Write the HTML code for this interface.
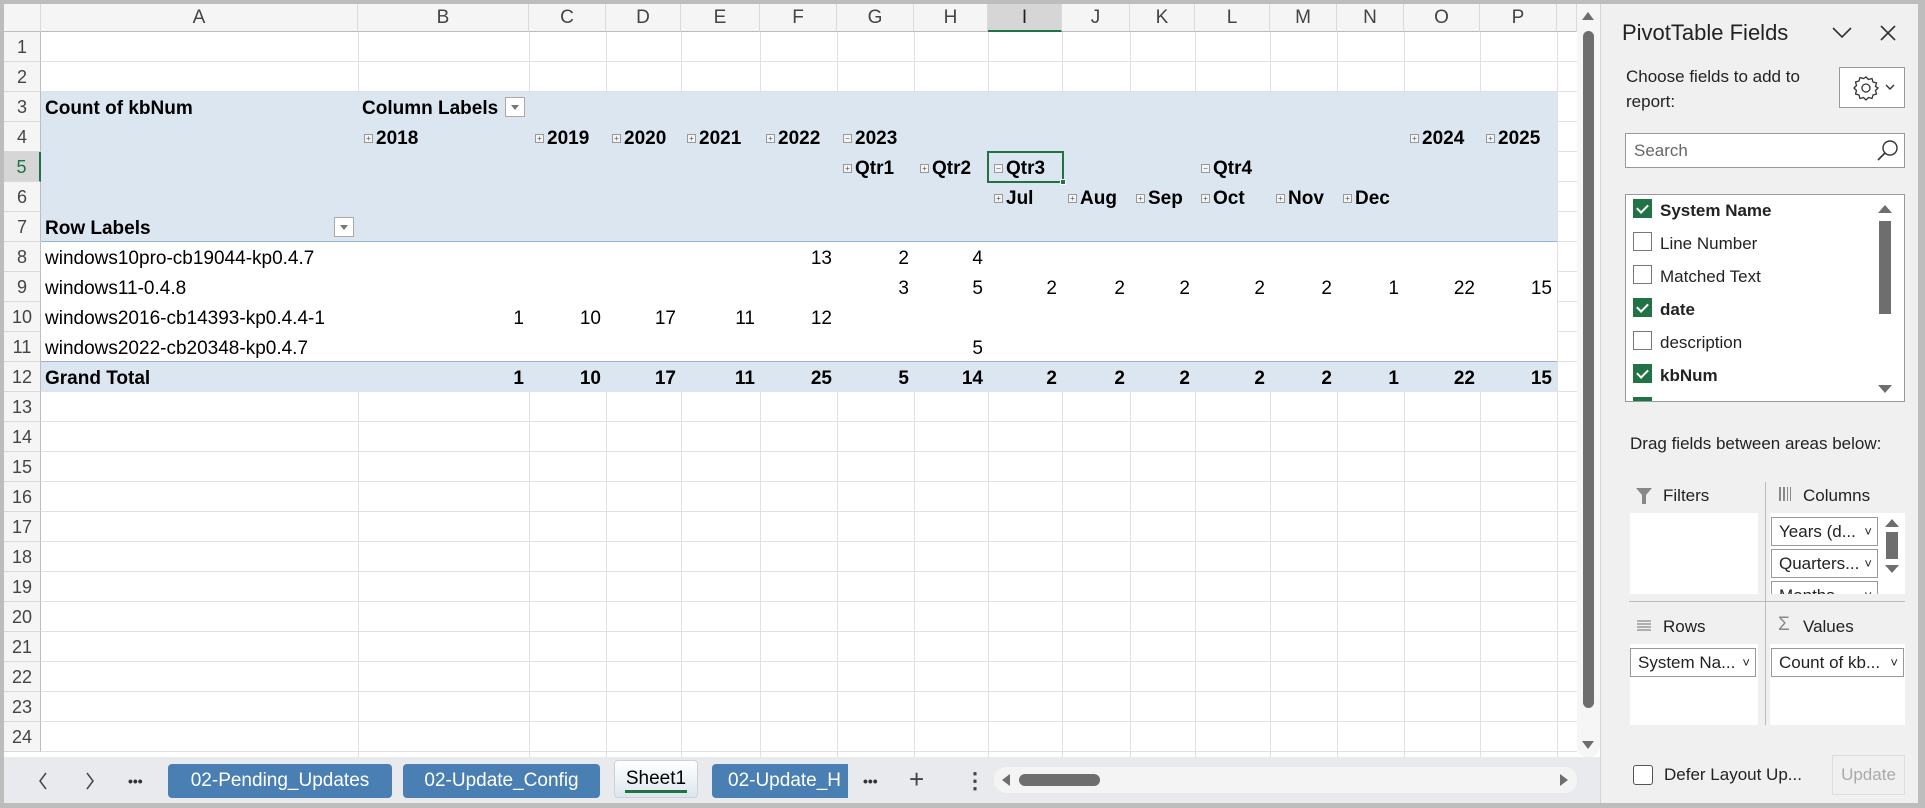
<!DOCTYPE html>
<html><head><meta charset="utf-8">
<style>
*{margin:0;padding:0;box-sizing:border-box}
body{width:1925px;height:808px;background:#bdbdbd;position:relative;overflow:hidden;font-family:"Liberation Sans",Arial,sans-serif;color:#000}
.a{position:absolute}
#sheet{position:absolute;left:4px;top:4px;width:1596px;height:799px;background:#fff;overflow:hidden}
.gl{position:absolute;left:41px;top:32px;width:1536px;height:725px;background:repeating-linear-gradient(to bottom,transparent 0,transparent 29px,#e1e1e1 29px,#e1e1e1 30px)}
.vl{position:absolute;top:32px;width:1px;height:725px;background:#e1e1e1}
.ch{position:absolute;top:4px;height:28px;line-height:28px;text-align:center;font-size:19px;color:#444;background:#f5f5f5;border-right:1px solid #dadada;border-bottom:1px solid #bdbdbd}
.rh{position:absolute;left:4px;width:37px;height:30px;line-height:30px;text-align:center;font-size:18px;color:#444;background:#f5f5f5;border-bottom:1px solid #dadada;border-right:1px solid #bdbdbd}
.c{position:absolute;height:30px;line-height:34px;font-size:19px;white-space:nowrap}
.b{font-weight:bold}
.r{text-align:right;padding-right:5px}
.pm{display:inline-block;width:9px;height:9px;border:1px solid #999;font-size:8px;line-height:7px;text-align:center;font-style:normal;font-weight:normal;color:#555;vertical-align:3px;margin-right:3px;background:#f4f4f4}
.dd{position:absolute;width:20px;height:20px;border:1px solid #aaa;background:#fff}
.dd:after{content:"";position:absolute;left:5px;top:7px;border-left:4px solid transparent;border-right:4px solid transparent;border-top:5px solid #777}
.tab{position:absolute;top:764px;height:34px;line-height:34px;border-radius:4px;background:#4a7fb3;color:#fff;font-size:19px;text-align:center}
.p{position:absolute;font-size:17px;color:#222;white-space:nowrap}
.cb{position:absolute;width:19px;height:19px;border:1.5px solid #777;background:#fff}
.cb.on{background:#217346;border-color:#217346}
.cb.on:after{content:"";position:absolute;left:5px;top:2px;width:5px;height:9px;border-right:2px solid #fff;border-bottom:2px solid #fff;transform:rotate(45deg)}
.fi{position:absolute;height:29px;line-height:27px;border:1px solid #999;background:#fff;font-size:17px;padding-left:7px;color:#222;white-space:nowrap;overflow:hidden}
.fi:after{content:"˅";position:absolute;right:5px;top:0;font-size:13px}
</style></head><body>
<div id="sheet"></div>
<div class="gl"></div>
<div class="vl" style="left:358px"></div><div class="vl" style="left:529px"></div><div class="vl" style="left:606px"></div><div class="vl" style="left:681px"></div><div class="vl" style="left:760px"></div><div class="vl" style="left:837px"></div><div class="vl" style="left:914px"></div><div class="vl" style="left:988px"></div><div class="vl" style="left:1062px"></div><div class="vl" style="left:1130px"></div><div class="vl" style="left:1195px"></div><div class="vl" style="left:1270px"></div><div class="vl" style="left:1337px"></div><div class="vl" style="left:1404px"></div><div class="vl" style="left:1480px"></div><div class="vl" style="left:1557px"></div>
<div class="a" style="left:41px;top:92px;width:1516px;height:150px;background:#dce6f1;border-bottom:1px solid #95b3d7"></div>
<div class="a" style="left:41px;top:242px;width:1516px;height:120px;background:#fff"></div>
<div class="a" style="left:41px;top:361px;width:1516px;height:31px;background:#dce6f1;border-top:1px solid #95b3d7"></div>
<div class="ch" style="left:4px;width:37px"></div>
<div class="ch" style="left:41px;width:317px">A</div><div class="ch" style="left:358px;width:171px">B</div><div class="ch" style="left:529px;width:77px">C</div><div class="ch" style="left:606px;width:75px">D</div><div class="ch" style="left:681px;width:79px">E</div><div class="ch" style="left:760px;width:77px">F</div><div class="ch" style="left:837px;width:77px">G</div><div class="ch" style="left:914px;width:74px">H</div><div class="ch" style="left:988px;width:74px;background:#d6d6d6;border-bottom:2px solid #217346;color:#222">I</div><div class="ch" style="left:1062px;width:68px">J</div><div class="ch" style="left:1130px;width:65px">K</div><div class="ch" style="left:1195px;width:75px">L</div><div class="ch" style="left:1270px;width:67px">M</div><div class="ch" style="left:1337px;width:67px">N</div><div class="ch" style="left:1404px;width:76px">O</div><div class="ch" style="left:1480px;width:77px">P</div><div class="ch" style="left:1557px;width:20px"></div>
<div class="rh" style="top:32px">1</div><div class="rh" style="top:62px">2</div><div class="rh" style="top:92px">3</div><div class="rh" style="top:122px">4</div><div class="rh" style="top:152px;background:#d6d6d6;border-right:2px solid #217346;color:#217346">5</div><div class="rh" style="top:182px">6</div><div class="rh" style="top:212px">7</div><div class="rh" style="top:242px">8</div><div class="rh" style="top:272px">9</div><div class="rh" style="top:302px">10</div><div class="rh" style="top:332px">11</div><div class="rh" style="top:362px">12</div><div class="rh" style="top:392px">13</div><div class="rh" style="top:422px">14</div><div class="rh" style="top:452px">15</div><div class="rh" style="top:482px">16</div><div class="rh" style="top:512px">17</div><div class="rh" style="top:542px">18</div><div class="rh" style="top:572px">19</div><div class="rh" style="top:602px">20</div><div class="rh" style="top:632px">21</div><div class="rh" style="top:662px">22</div><div class="rh" style="top:692px">23</div><div class="rh" style="top:722px">24</div>
<div class="c b" style="left:45px;top:92px">Count of kbNum</div>
<div class="c b" style="left:362px;top:92px">Column Labels</div>
<div class="dd" style="left:505px;top:97px"></div>
<div class="c b" style="left:45px;top:212px">Row Labels</div>
<div class="dd" style="left:334px;top:217px"></div>
<div class="c b" style="left:364px;top:122px"><i class="pm">+</i>2018</div>
<div class="c b" style="left:535px;top:122px"><i class="pm">+</i>2019</div>
<div class="c b" style="left:612px;top:122px"><i class="pm">+</i>2020</div>
<div class="c b" style="left:687px;top:122px"><i class="pm">+</i>2021</div>
<div class="c b" style="left:766px;top:122px"><i class="pm">+</i>2022</div>
<div class="c b" style="left:843px;top:122px"><i class="pm">−</i>2023</div>
<div class="c b" style="left:1410px;top:122px"><i class="pm">+</i>2024</div>
<div class="c b" style="left:1486px;top:122px"><i class="pm">+</i>2025</div>
<div class="c b" style="left:843px;top:152px"><i class="pm">+</i>Qtr1</div>
<div class="c b" style="left:920px;top:152px"><i class="pm">+</i>Qtr2</div>
<div class="c b" style="left:994px;top:152px"><i class="pm">−</i>Qtr3</div>
<div class="c b" style="left:1201px;top:152px"><i class="pm">−</i>Qtr4</div>
<div class="c b" style="left:994px;top:182px"><i class="pm">+</i>Jul</div>
<div class="c b" style="left:1068px;top:182px"><i class="pm">+</i>Aug</div>
<div class="c b" style="left:1136px;top:182px"><i class="pm">+</i>Sep</div>
<div class="c b" style="left:1201px;top:182px"><i class="pm">+</i>Oct</div>
<div class="c b" style="left:1276px;top:182px"><i class="pm">+</i>Nov</div>
<div class="c b" style="left:1343px;top:182px"><i class="pm">+</i>Dec</div>
<div class="a" style="left:987px;top:151px;width:77px;height:32px;border:2px solid #217346"></div>
<div class="a" style="left:1060px;top:179px;width:6px;height:6px;background:#217346;border:1px solid #fff"></div>
<div class="c" style="left:45px;top:242px">windows10pro-cb19044-kp0.4.7</div>
<div class="c" style="left:45px;top:272px">windows11-0.4.8</div>
<div class="c" style="left:45px;top:302px">windows2016-cb14393-kp0.4.4-1</div>
<div class="c" style="left:45px;top:332px">windows2022-cb20348-kp0.4.7</div>
<div class="c b" style="left:45px;top:362px">Grand Total</div>
<div class="c r" style="left:760px;width:77px;top:242px">13</div><div class="c r" style="left:837px;width:77px;top:242px">2</div><div class="c r" style="left:914px;width:74px;top:242px">4</div>
<div class="c r" style="left:837px;width:77px;top:272px">3</div><div class="c r" style="left:914px;width:74px;top:272px">5</div><div class="c r" style="left:988px;width:74px;top:272px">2</div><div class="c r" style="left:1062px;width:68px;top:272px">2</div><div class="c r" style="left:1130px;width:65px;top:272px">2</div><div class="c r" style="left:1195px;width:75px;top:272px">2</div><div class="c r" style="left:1270px;width:67px;top:272px">2</div><div class="c r" style="left:1337px;width:67px;top:272px">1</div><div class="c r" style="left:1404px;width:76px;top:272px">22</div><div class="c r" style="left:1480px;width:77px;top:272px">15</div>
<div class="c r" style="left:358px;width:171px;top:302px">1</div><div class="c r" style="left:529px;width:77px;top:302px">10</div><div class="c r" style="left:606px;width:75px;top:302px">17</div><div class="c r" style="left:681px;width:79px;top:302px">11</div><div class="c r" style="left:760px;width:77px;top:302px">12</div>
<div class="c r" style="left:914px;width:74px;top:332px">5</div>
<div class="c r b" style="left:358px;width:171px;top:362px">1</div><div class="c r b" style="left:529px;width:77px;top:362px">10</div><div class="c r b" style="left:606px;width:75px;top:362px">17</div><div class="c r b" style="left:681px;width:79px;top:362px">11</div><div class="c r b" style="left:760px;width:77px;top:362px">25</div><div class="c r b" style="left:837px;width:77px;top:362px">5</div><div class="c r b" style="left:914px;width:74px;top:362px">14</div><div class="c r b" style="left:988px;width:74px;top:362px">2</div><div class="c r b" style="left:1062px;width:68px;top:362px">2</div><div class="c r b" style="left:1130px;width:65px;top:362px">2</div><div class="c r b" style="left:1195px;width:75px;top:362px">2</div><div class="c r b" style="left:1270px;width:67px;top:362px">2</div><div class="c r b" style="left:1337px;width:67px;top:362px">1</div><div class="c r b" style="left:1404px;width:76px;top:362px">22</div><div class="c r b" style="left:1480px;width:77px;top:362px">15</div>
<div class="a" style="left:1577px;top:4px;width:23px;height:753px;background:#f6f6f6;border-radius:0 0 10px 10px"></div>
<div class="a" style="left:1582px;top:12px;border-left:6px solid transparent;border-right:6px solid transparent;border-bottom:8px solid #6e6e6e"></div>
<div class="a" style="left:1583px;top:31px;width:11px;height:677px;background:#6e6e6e;border-radius:6px"></div>
<div class="a" style="left:1582px;top:741px;border-left:6px solid transparent;border-right:6px solid transparent;border-top:8px solid #6e6e6e"></div>
<div class="a" style="left:4px;top:757px;width:1596px;height:46px;background:#e8eaed"></div>
<svg class="a" style="left:37px;top:771px" width="12" height="20"><path d="M9 2 L3 10 L9 18" stroke="#444" stroke-width="1.5" fill="none"/></svg>
<svg class="a" style="left:84px;top:771px" width="12" height="20"><path d="M3 2 L9 10 L3 18" stroke="#444" stroke-width="1.5" fill="none"/></svg>
<div class="a" style="left:128px;top:764px;font-size:14px;color:#333;line-height:34px;font-weight:bold">•••</div>
<div class="tab" style="left:168px;width:224px">02-Pending_Updates</div>
<div class="tab" style="left:403px;width:197px">02-Update_Config</div>
<div class="a" style="left:614px;top:760px;width:84px;height:38px;background:linear-gradient(#fff,#dce6f1);border:1px solid #d0d0d0;border-radius:4px;font-size:19px;line-height:36px;text-align:center">Sheet1</div>
<div class="a" style="left:625px;top:790px;width:62px;height:3px;background:#217346"></div>
<div class="tab" style="left:712px;width:136px;border-radius:4px 0 0 4px;text-align:left;padding-left:16px;overflow:hidden">02-Update_H</div>
<div class="a" style="left:863px;top:764px;font-size:14px;color:#333;line-height:34px;font-weight:bold">•••</div>
<div class="a" style="left:909px;top:762px;font-size:26px;color:#444;line-height:34px">+</div>
<div class="a" style="left:964px;top:764px;font-size:22px;color:#444;line-height:34px;font-weight:bold">⋮</div>
<div class="a" style="left:994px;top:767px;width:583px;height:26px;background:#f4f4f4;border-radius:12px"></div>
<div class="a" style="left:1002px;top:774px;border-top:6px solid transparent;border-bottom:6px solid transparent;border-right:8px solid #6e6e6e"></div>
<div class="a" style="left:1019px;top:774px;width:81px;height:12px;background:#6e6e6e;border-radius:6px"></div>
<div class="a" style="left:1560px;top:774px;border-top:6px solid transparent;border-bottom:6px solid transparent;border-left:8px solid #6e6e6e"></div>
<div class="a" style="left:1600px;top:4px;width:318px;height:799px;background:#f0f0f0;border-left:1px solid #d4d4d4"></div>
<div class="p" style="left:1622px;top:20px;font-size:22px;color:#222">PivotTable Fields</div>
<svg class="a" style="left:1831px;top:26px" width="22" height="14"><path d="M2 2 L11 11 L20 2" stroke="#333" stroke-width="1.6" fill="none"/></svg>
<svg class="a" style="left:1880px;top:25px" width="16" height="16"><path d="M1 1 L15 15 M15 1 L1 15" stroke="#333" stroke-width="1.6"/></svg>
<div class="p" style="left:1626px;top:64px;line-height:25px">Choose fields to add to<br>report:</div>
<div class="a" style="left:1839px;top:67px;width:66px;height:41px;border:1px solid #999;background:#fff"></div>
<svg class="a" style="left:1852px;top:74px" width="28" height="28" viewBox="0 0 28 28"><path d="M14 3 L16.5 5.5 L20 4.5 L21 8 L24.5 9 L23.5 12.5 L26 14 L23.5 16.5 L24.5 20 L21 21 L20 24.5 L16.5 23.5 L14 26 L11.5 23.5 L8 24.5 L7 21 L3.5 20 L4.5 16.5 L2 14 L4.5 11.5 L3.5 8 L7 7 L8 3.5 L11.5 4.5 Z" fill="none" stroke="#333" stroke-width="1.3"/><circle cx="14" cy="14" r="4" fill="none" stroke="#333" stroke-width="1.3"/></svg>
<svg class="a" style="left:1885px;top:84px" width="10" height="7"><path d="M1 1 L5 5 L9 1" stroke="#333" stroke-width="1.4" fill="none"/></svg>
<div class="a" style="left:1625px;top:133px;width:280px;height:35px;border:1px solid #999;background:#fff"></div>
<div class="p" style="left:1634px;top:141px;color:#666">Search</div>
<svg class="a" style="left:1876px;top:138px" width="24" height="24"><circle cx="14" cy="10" r="7" fill="none" stroke="#333" stroke-width="1.4"/><path d="M9 15 L2 22" stroke="#333" stroke-width="1.6"/></svg>
<div class="a" style="left:1625px;top:194px;width:280px;height:208px;border:1px solid #999;background:#fff;overflow:hidden">
<div class="cb on" style="left:7px;top:4px"></div><div class="p b" style="left:34px;top:6px">System Name</div>
<div class="cb" style="left:7px;top:37px"></div><div class="p" style="left:34px;top:39px">Line Number</div>
<div class="cb" style="left:7px;top:70px"></div><div class="p" style="left:34px;top:72px">Matched Text</div>
<div class="cb on" style="left:7px;top:103px"></div><div class="p b" style="left:34px;top:105px">date</div>
<div class="cb" style="left:7px;top:136px"></div><div class="p" style="left:34px;top:138px">description</div>
<div class="cb on" style="left:7px;top:169px"></div><div class="p b" style="left:34px;top:171px">kbNum</div>
<div class="cb on" style="left:7px;top:202px"></div>
<div class="a" style="left:252px;top:10px;border-left:7px solid transparent;border-right:7px solid transparent;border-bottom:8px solid #6e6e6e"></div>
<div class="a" style="left:253px;top:26px;width:12px;height:93px;background:#6e6e6e"></div>
<div class="a" style="left:252px;top:190px;border-left:7px solid transparent;border-right:7px solid transparent;border-top:8px solid #6e6e6e"></div>
</div>
<div class="p" style="left:1630px;top:434px">Drag fields between areas below:</div>
<svg class="a" style="left:1635px;top:487px" width="18" height="18"><path d="M1 1 H17 L11 8 V17 H7 V8 Z" fill="#888"/></svg>
<div class="p" style="left:1663px;top:486px">Filters</div>
<svg class="a" style="left:1778px;top:486px" width="16" height="16"><rect x="1" y="1" width="2" height="14" fill="#888"/><rect x="5" y="1" width="2" height="14" fill="#888"/><rect x="9" y="1" width="1" height="14" fill="#888"/><rect x="12" y="1" width="1" height="14" fill="#888"/></svg>
<div class="p" style="left:1803px;top:486px">Columns</div>
<div class="a" style="left:1765px;top:482px;width:1px;height:243px;background:#bbb"></div>
<div class="a" style="left:1629px;top:601px;width:276px;height:1px;background:#bbb"></div>
<div class="a" style="left:1630px;top:513px;width:128px;height:81px;background:#fff"></div>
<div class="a" style="left:1770px;top:513px;width:135px;height:81px;background:#fff;overflow:hidden">
<div class="fi" style="left:1px;top:4px;width:107px">Years (d...</div>
<div class="fi" style="left:1px;top:36px;width:107px">Quarters...</div>
<div class="fi" style="left:1px;top:68px;width:107px">Months</div>
<div class="a" style="left:115px;top:6px;border-left:7px solid transparent;border-right:7px solid transparent;border-bottom:8px solid #6e6e6e"></div>
<div class="a" style="left:116px;top:19px;width:12px;height:27px;background:#6e6e6e"></div>
<div class="a" style="left:115px;top:52px;border-left:7px solid transparent;border-right:7px solid transparent;border-top:8px solid #6e6e6e"></div>
</div>
<svg class="a" style="left:1636px;top:619px" width="16" height="14"><path d="M1 2H15M1 5H15M1 8H15M1 11H15" stroke="#888" stroke-width="1.2"/></svg>
<div class="p" style="left:1663px;top:617px">Rows</div>
<div class="p" style="left:1778px;top:614px;color:#888;font-size:19px">Σ</div>
<div class="p" style="left:1803px;top:617px">Values</div>
<div class="a" style="left:1630px;top:644px;width:128px;height:81px;background:#fff"></div>
<div class="a" style="left:1770px;top:644px;width:135px;height:81px;background:#fff"></div>
<div class="fi" style="left:1630px;top:648px;width:126px">System Na...</div>
<div class="fi" style="left:1771px;top:648px;width:133px">Count of kb...</div>
<div class="a" style="left:1633px;top:765px;width:20px;height:20px;border:1.5px solid #555;border-radius:3px;background:#fff"></div>
<div class="p" style="left:1664px;top:765px">Defer Layout Up...</div>
<div class="a" style="left:1832px;top:755px;width:73px;height:40px;border:1px solid #ddd;font-size:17px;color:#aaa;line-height:38px;text-align:center">Update</div>
</body></html>
